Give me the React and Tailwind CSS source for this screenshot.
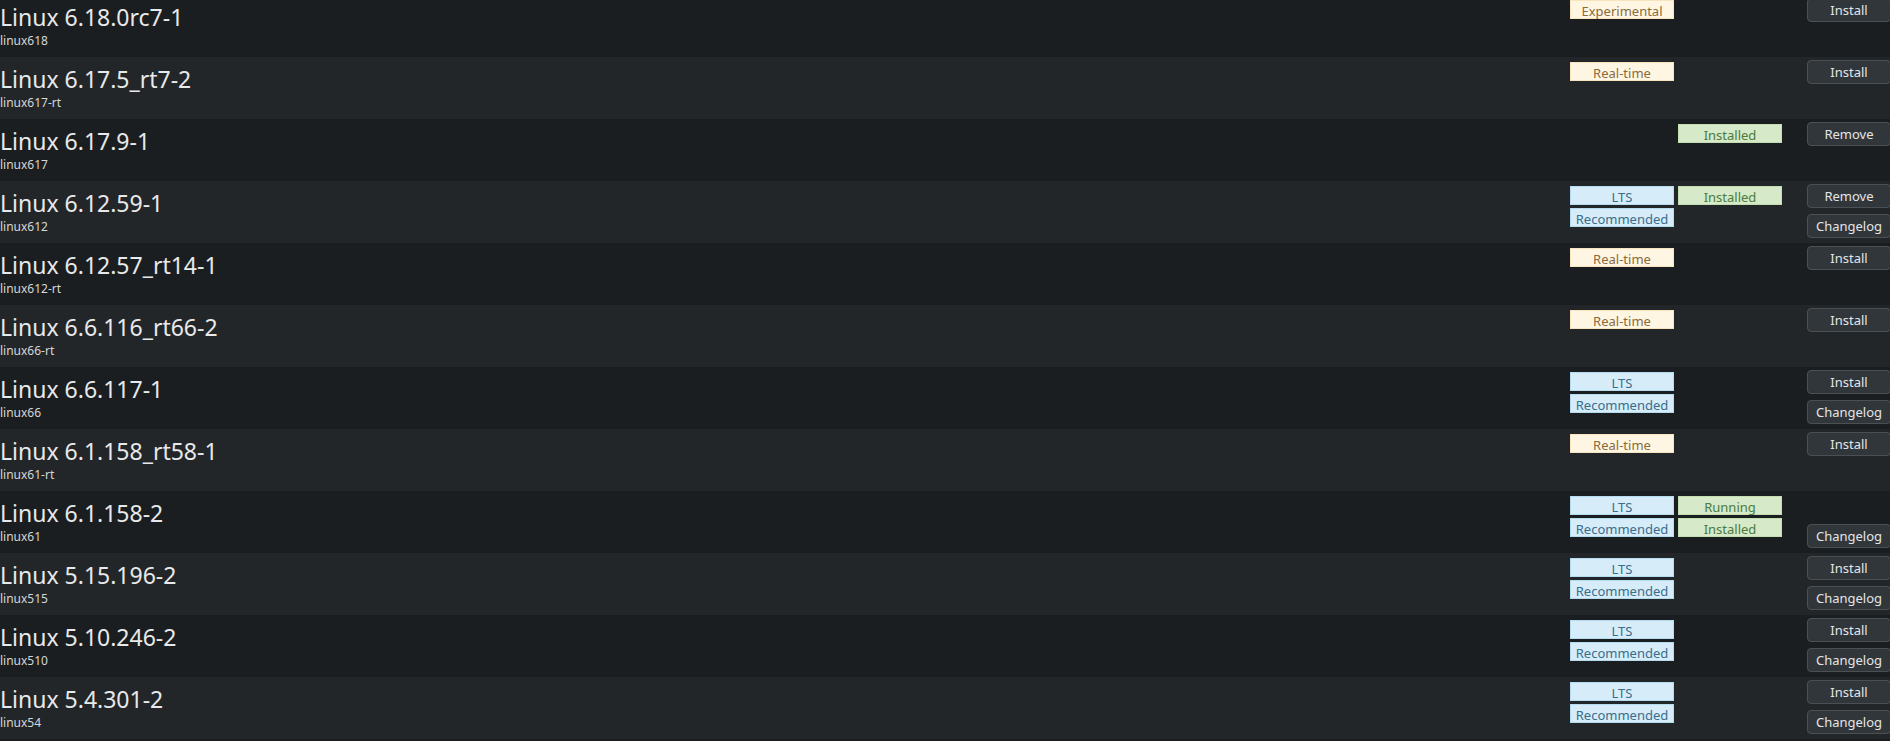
import React from "react";

const rows = [
  { t: "Linux 6.18.0rc7-1", p: "linux618", b1: ["exp"], b2: [], btn: ["Install"] },
  { t: "Linux 6.17.5_rt7-2", p: "linux617-rt", b1: ["rt"], b2: [], btn: ["Install"] },
  { t: "Linux 6.17.9-1", p: "linux617", b1: [], b2: ["Installed"], btn: ["Remove"] },
  { t: "Linux 6.12.59-1", p: "linux612", b1: ["lts", "rec"], b2: ["Installed"], btn: ["Remove", "Changelog"] },
  { t: "Linux 6.12.57_rt14-1", p: "linux612-rt", b1: ["rt"], b2: [], btn: ["Install"] },
  { t: "Linux 6.6.116_rt66-2", p: "linux66-rt", b1: ["rt"], b2: [], btn: ["Install"] },
  { t: "Linux 6.6.117-1", p: "linux66", b1: ["lts", "rec"], b2: [], btn: ["Install", "Changelog"] },
  { t: "Linux 6.1.158_rt58-1", p: "linux61-rt", b1: ["rt"], b2: [], btn: ["Install"] },
  { t: "Linux 6.1.158-2", p: "linux61", b1: ["lts", "rec"], b2: ["Running", "Installed"], btn: [null, "Changelog"] },
  { t: "Linux 5.15.196-2", p: "linux515", b1: ["lts", "rec"], b2: [], btn: ["Install", "Changelog"] },
  { t: "Linux 5.10.246-2", p: "linux510", b1: ["lts", "rec"], b2: [], btn: ["Install", "Changelog"] },
  { t: "Linux 5.4.301-2", p: "linux54", b1: ["lts", "rec"], b2: [], btn: ["Install", "Changelog"] },
];

const warm = "bg-[#fef6e3] border-[#f9e5bd] text-[#8a6b3c]";
const blue = "bg-[#d6ecf8] border-[#b3dcf1] text-[#3a6d8e]";
const green = "bg-[#d6e9c8] border-[#c3deb0] text-[#4a7c3f]";

const kinds = {
  exp: ["Experimental", warm],
  rt: ["Real-time", warm],
  lts: ["LTS", blue],
  rec: ["Recommended", blue],
};

function Badge({ k }) {
  const [label, cls] = kinds[k] || [k, green];
  return (
    <div className={`h-[19px] w-[104px] border flex items-center justify-center text-[13px] leading-[17px] pt-[3px] ${cls}`}>
      {label}
    </div>
  );
}

function Btn({ label }) {
  if (!label) return <div className="h-[24px]" />;
  return (
    <div className="h-[24px] w-[84px] rounded-[4px] border border-[#4b5055] bg-[#31363b] text-[#e3e5e7] text-[13px] flex items-center justify-center pt-[1px]">
      {label}
    </div>
  );
}

export default function App() {
  return (
    <div
      className="w-[1890px] h-[741px] overflow-hidden bg-[#1b1e20]"
      style={{ fontFamily: '"Noto Sans", "Open Sans", sans-serif' }}
    >
      <div className="-mt-[5px]">
        {rows.map((r, i) => (
          <div
            key={i}
            className={`h-[62px] flex ${i % 2 === 0 ? "bg-[#1b1e20]" : "bg-[#232629]"}`}
          >
            <div className="flex-1 pt-[6px]">
              <div className="text-[23px] leading-[32px] text-[#e8e9ea]">{r.t}</div>
              <div className="text-[12px] leading-[16px] text-[#d4d6d8]">{r.p}</div>
            </div>
            <div className="w-[212px] pt-[5px] flex gap-[4px]">
              <div className="w-[104px] flex flex-col gap-[3px]">
                {r.b1.map((b) => (
                  <Badge key={b} k={b} />
                ))}
              </div>
              <div className="w-[104px] flex flex-col gap-[3px]">
                {r.b2.map((b) => (
                  <Badge key={b} k={b} />
                ))}
              </div>
            </div>
            <div className="w-[84px] ml-[25px] -mr-[1px] pt-[3px] flex flex-col gap-[6px]">
              {r.btn.map((b, j) => (
                <Btn key={j} label={b} />
              ))}
            </div>
          </div>
        ))}
      </div>
    </div>
  );
}
